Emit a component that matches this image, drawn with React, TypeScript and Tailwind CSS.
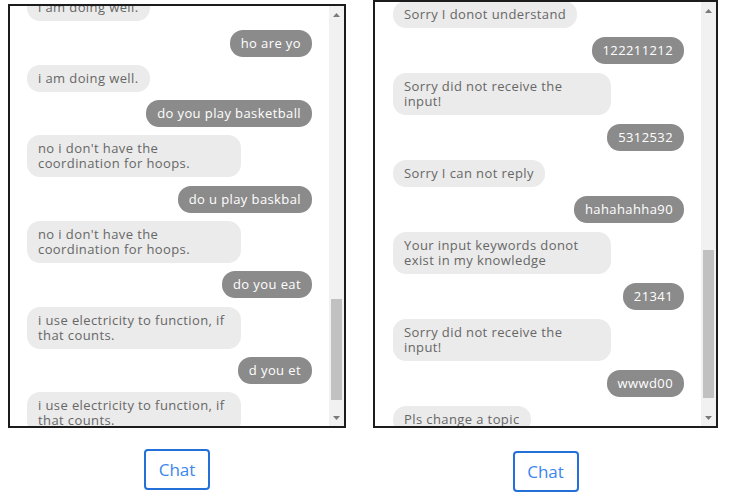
import { useLayoutEffect, useRef } from 'react';

type Msg = { from: 'bot' | 'user'; text: string };

const leftChat: Msg[] = [
  { from: 'user', text: 'how are you' },
  { from: 'bot', text: 'i am doing well.' },
  { from: 'user', text: 'ho are yo' },
  { from: 'bot', text: 'i am doing well.' },
  { from: 'user', text: 'do you play basketball' },
  { from: 'bot', text: "no i don't have the coordination for hoops." },
  { from: 'user', text: 'do u play baskbal' },
  { from: 'bot', text: "no i don't have the coordination for hoops." },
  { from: 'user', text: 'do you eat' },
  { from: 'bot', text: 'i use electricity to function, if that counts.' },
  { from: 'user', text: 'd you et' },
  { from: 'bot', text: 'i use electricity to function, if that counts.' },
];

const rightChat: Msg[] = [
  { from: 'user', text: 'asdfgh' },
  { from: 'bot', text: 'Sorry I donot understand' },
  { from: 'user', text: '122211212' },
  { from: 'bot', text: 'Sorry did not receive the input!' },
  { from: 'user', text: '5312532' },
  { from: 'bot', text: 'Sorry I can not reply' },
  { from: 'user', text: 'hahahahha90' },
  { from: 'bot', text: 'Your input keywords donot exist in my knowledge' },
  { from: 'user', text: '21341' },
  { from: 'bot', text: 'Sorry did not receive the input!' },
  { from: 'user', text: 'wwwd00' },
  { from: 'bot', text: 'Pls change a topic' },
];

function Arrow({ down }: { down?: boolean }) {
  return (
    <svg width="7" height="4" viewBox="0 0 7 4" className={down ? 'rotate-180' : ''}>
      <path d="M3.5 0 L7 4 L0 4 Z" fill="#7a7a7a" />
    </svg>
  );
}

function ChatWindow({
  messages,
  scroll,
  gap,
  thumbTop,
  thumbHeight,
  sidePad,
  heightClass,
}: {
  messages: Msg[];
  scroll: number;
  gap: string;
  thumbTop: string;
  thumbHeight: string;
  sidePad: string;
  heightClass: string;
}) {
  const ref = useRef<HTMLDivElement>(null);

  useLayoutEffect(() => {
    if (ref.current) ref.current.scrollTop = scroll;
  }, [scroll]);

  return (
    <div className={`flex w-full border-2 border-[#1c1c1c] bg-white ${heightClass}`}>
      <div ref={ref} className="flex-1 overflow-hidden">
        <div className={`flex flex-col pt-[12px] pb-[200px] ${gap} ${sidePad}`}>
          {messages.map((m, i) =>
            m.from === 'bot' ? (
              <div
                key={i}
                className="max-w-[75%] self-start rounded-[13px] bg-[#ebebeb] px-[11px] py-[6px] text-[13px] leading-[15px] tracking-[0.4px] text-[#676767]"
              >
                {m.text}
              </div>
            ) : (
              <div
                key={i}
                className="max-w-[75%] self-end rounded-[13px] bg-[#8b8b8b] px-[11px] py-[6px] text-[13px] leading-[15px] tracking-[0.4px] text-white"
              >
                {m.text}
              </div>
            ),
          )}
        </div>
      </div>
      <div className="flex w-[15px] flex-col bg-[#f1f1f1]">
        <div className="flex h-[17px] items-center justify-center">
          <Arrow />
        </div>
        <div className="flex flex-1 flex-col">
          <div className={`mx-[2px] bg-[#c1c1c1] ${thumbTop} ${thumbHeight}`} />
        </div>
        <div className="flex h-[17px] items-center justify-center">
          <Arrow down />
        </div>
      </div>
    </div>
  );
}

function ChatButton() {
  return (
    <button className="h-[41px] w-[66px] rounded-[4px] border-2 border-[#2370d8] bg-white text-[17px] text-[#3b86ee]">
      Chat
    </button>
  );
}

export default function App() {
  return (
    <div className="flex h-[498px] w-[732px] bg-white font-['Open_Sans',sans-serif]">
      <div className="ml-[8px] mt-[4px] flex w-[338px] flex-col items-center gap-[21px]">
        <ChatWindow
          messages={leftChat}
          scroll={59}
          gap="gap-[8.3px]"
          thumbTop="mt-[276px]"
          thumbHeight="h-[101px]"
          sidePad="px-[17px]"
          heightClass="h-[424px]"
        />
        <ChatButton />
      </div>
      <div className="ml-[27px] flex w-[345px] flex-col items-center gap-[23px]">
        <ChatWindow
          messages={rightChat}
          scroll={49}
          gap="gap-[9px]"
          thumbTop="mt-[231px]"
          thumbHeight="h-[148px]"
          sidePad="pl-[18px] pr-[17px]"
          heightClass="h-[428px]"
        />
        <ChatButton />
      </div>
    </div>
  );
}
